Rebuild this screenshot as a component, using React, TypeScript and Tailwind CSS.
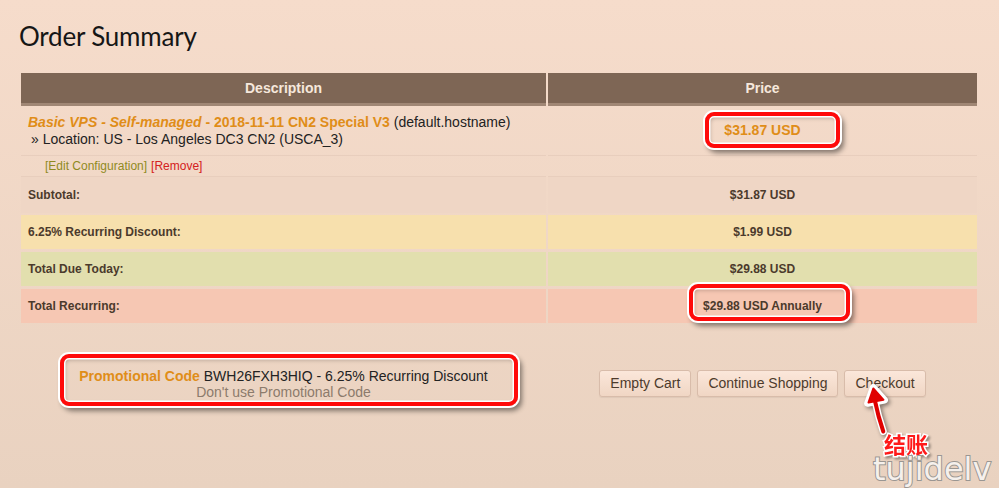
import React from "react";

const arial = "font-['Liberation_Sans',Arial,sans-serif]";

function RedBox({ className }: { className: string }) {
  return (
    <div
      className={`absolute rounded-[9px] border-[4px] border-[#ff0a0a] shadow-[0_0_0_2px_#ffffff,inset_0_0_0_1.5px_#ffffff,inset_1px_2px_4px_rgba(0,0,0,0.25),3px_4px_5px_1px_rgba(0,0,0,0.45)] ${className}`}
    />
  );
}

function SumRow({ label, value, bg, h }: { label: string; value: string; bg: string; h: string }) {
  return (
    <div className={`flex gap-[2px] ${h}`}>
      <div className={`w-[525px] flex items-center pl-[7px] ${bg}`}>
        <span className="text-[12px] font-bold text-[#4b3a2c]">{label}</span>
      </div>
      <div className={`flex-1 flex items-center justify-center ${bg}`}>
        <span className="text-[12px] font-bold text-[#4b3a2c]">{value}</span>
      </div>
    </div>
  );
}

function Btn({ children }: { children: React.ReactNode }) {
  return (
    <button className="h-[27px] px-[10px] rounded-[3px] border border-[#d8bcaa] bg-gradient-to-b from-[#fbe7da] to-[#f0d6c4] text-[14px] text-[#4d3b2c] shadow-[0_1px_1px_rgba(0,0,0,0.06)]">
      {children}
    </button>
  );
}

export default function App() {
  return (
    <div className={`relative w-full h-[488px] overflow-hidden bg-gradient-to-b from-[#f6dccb] to-[#e9d2c0] ${arial}`}>
      <div className="pl-[19px] pt-[19px]">
        <h1 className="font-['Lato','Open_Sans',sans-serif] text-[26px] leading-[34px] text-[#161616] tracking-[-0.2px]">
          Order Summary
        </h1>
      </div>

      <div className="ml-[21px] mt-[20px] w-[956px]">
        {/* header */}
        <div className="flex gap-[2px] h-[33px]">
          <div className="w-[525px] bg-[#7e6655] border-b-[3px] border-[#a08775] flex items-center justify-center">
            <span className="text-[14px] font-bold text-[#f6e8dc]">Description</span>
          </div>
          <div className="flex-1 bg-[#7e6655] border-b-[3px] border-[#a08775] flex items-center justify-center">
            <span className="text-[14px] font-bold text-[#f6e8dc]">Price</span>
          </div>
        </div>

        {/* product row */}
        <div className="flex gap-[2px] h-[50px]">
          <div className="w-[525px] border-b border-[#e8cebd] pl-[7px] pt-[8px] text-[14px] leading-[17px] text-[#222]">
            <div>
              <span className="font-bold italic text-[#e08d18]">Basic VPS - Self-managed</span>
              <span className="font-bold text-[#e08d18]"> - 2018-11-11 CN2 Special V3</span>
              <span> (default.hostname)</span>
            </div>
            <div className="pl-[3px]">» Location: US - Los Angeles DC3 CN2 (USCA_3)</div>
          </div>
          <div className="flex-1 border-b border-[#e8cebd] flex items-center justify-center">
            <span className="text-[14px] font-bold text-[#e08d18]">$31.87 USD</span>
          </div>
        </div>

        {/* edit row */}
        <div className="flex gap-[2px] h-[21px]">
          <div className="w-[525px] border-b border-[#e8cebd] flex items-center pl-[24px] text-[12px]">
            <span className="text-[#8f8a1f]">[Edit Configuration]</span>
            <span className="text-[#d42020] ml-[4px]">[Remove]</span>
          </div>
          <div className="flex-1 border-b border-[#e8cebd]" />
        </div>

        <div className="flex flex-col gap-[3px]">
          <div className="mb-[-1px]">
            <SumRow label="Subtotal:" value="$31.87 USD" bg="bg-[#efd6c5]" h="h-[36px]" />
          </div>
          <SumRow label="6.25% Recurring Discount:" value="$1.99 USD" bg="bg-[#f7e0ad]" h="h-[34px]" />
          <SumRow label="Total Due Today:" value="$29.88 USD" bg="bg-[#e2dfae]" h="h-[34px]" />
          <SumRow label="Total Recurring:" value="$29.88 USD Annually" bg="bg-[#f6c7b3]" h="h-[34px]" />
        </div>

        {/* bottom */}
        <div className="flex gap-[2px] mt-[43px] h-[36px] items-center">
          <div className="w-[525px] flex flex-col items-center text-[14px] leading-[16px] mt-[-1px]">
            <div className="text-[#222]">
              <span className="font-bold text-[#e08d18]">Promotional Code</span> BWH26FXH3HIQ - 6.25% Recurring Discount
            </div>
            <div className="text-[#8c7b6c]">Don't use Promotional Code</div>
          </div>
          <div className="flex-1 flex justify-center gap-[6px] mt-[-2px]">
            <Btn>Empty Cart</Btn>
            <Btn>Continue Shopping</Btn>
            <Btn>Checkout</Btn>
          </div>
        </div>
      </div>

      {/* annotations */}
      <RedBox className="left-[705px] top-[112px] w-[135px] h-[36px]" />
      <RedBox className="left-[689px] top-[284px] w-[161px] h-[37px]" />
      <RedBox className="left-[60px] top-[354px] w-[458px] h-[52px]" />

      <svg
        className="absolute left-[855px] top-[380px] drop-shadow-[2px_2px_2px_rgba(0,0,0,0.45)]"
        width="50"
        height="66"
        viewBox="0 0 50 66"
      >
        <g stroke="#ffffff" strokeWidth="7" strokeLinecap="round" strokeLinejoin="round" fill="#ffffff">
          <path d="M20 21 Q23 36 28.3 51.5" fill="none" />
          <polygon points="18.3,7.5 12.7,23.3 29.5,20" />
        </g>
        <g stroke="#e00000" strokeWidth="4" strokeLinecap="round" strokeLinejoin="round" fill="#e00000">
          <path d="M20 21 Q23 36 28.3 51.5" fill="none" />
          <polygon points="18.3,8.5 13.5,22.5 28.5,19.8" strokeWidth="2" />
        </g>
      </svg>

      <div className="absolute left-[884px] top-[433px] font-['Noto_Sans_CJK_SC',sans-serif] font-bold text-[22px] leading-[20px] text-[#ff1a1a] [-webkit-text-stroke:3px_#ffffff] [paint-order:stroke_fill] drop-shadow-[2px_2px_1px_rgba(0,0,0,0.35)]">
        结账
      </div>

      <div className="absolute left-[873px] top-[454px] font-['DejaVu_Sans',sans-serif] text-[32px] leading-[30px] text-[#f5f0ec] [-webkit-text-stroke:2px_#9a9692] [paint-order:stroke_fill]">
        tujidelv
      </div>
    </div>
  );
}
